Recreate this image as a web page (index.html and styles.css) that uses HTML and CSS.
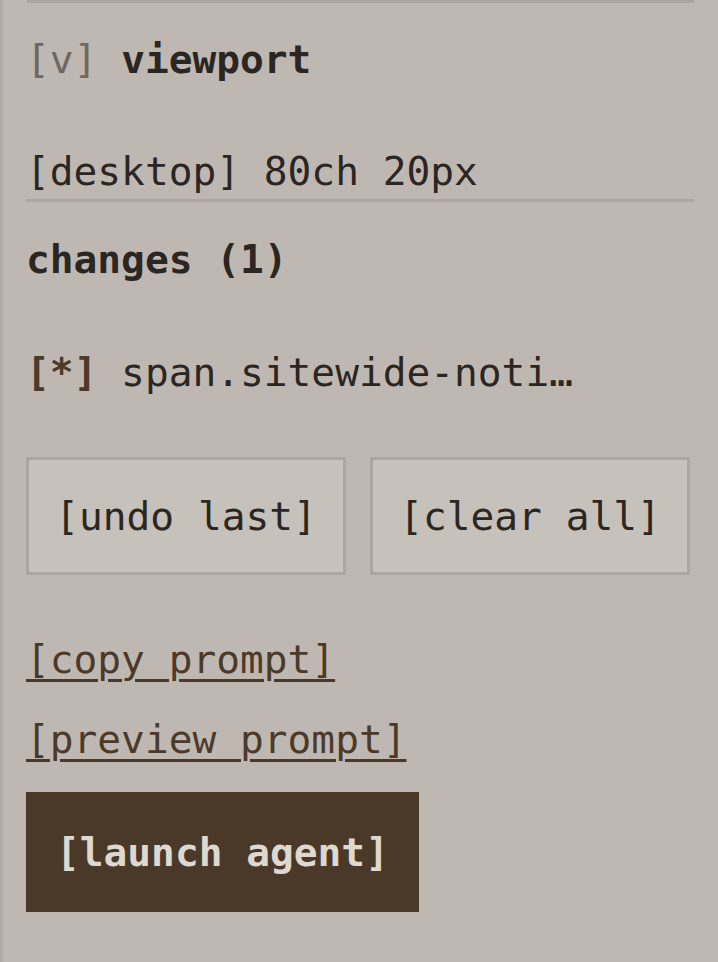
FILE: index.html
```html
<!DOCTYPE html>
<html lang="en">
<head>
<meta charset="utf-8">
<title>viewport panel</title>
<link rel="stylesheet" href="styles.css">
</head>
<body>
<div class="panel">
  <div class="rule-top"></div>
  <div class="section-head"><span class="toggle">[v]</span> <span class="title">viewport</span></div>
  <div class="viewport-row">[desktop] 80ch 20px</div>
  <div class="changes-title">changes (1)</div>
  <ul class="change-list">
    <li class="change-item"><span class="mark">[*]</span> span.sitewide-noti…</li>
  </ul>
  <div class="btn-row">
    <button class="btn">[undo last]</button>
    <button class="btn">[clear all]</button>
  </div>
  <a class="link link-copy" href="#">[copy prompt]</a>
  <a class="link link-preview" href="#">[preview prompt]</a>
  <button class="launch">[launch agent]</button>
</div>
</body>
</html>
```
FILE: styles.css
```css
html, body {
  margin: 0;
  padding: 0;
  background: #bfb8b2;
}
body {
  font-family: "DejaVu Sans Mono", "Liberation Mono", monospace;
  font-size: 39.5px;
  line-height: 48px;
  color: #2b2622;
  min-height: 962px;
}
.panel {
  border-left: 3px solid #b2aba5;
  padding: 0 24px 0 23px;
  min-height: 962px;
  box-sizing: border-box;
  display: flex;
  flex-direction: column;
  align-items: flex-start;
}
.rule-top {
  align-self: stretch;
  border-top: 3px solid #aca59f;
  margin-left: 1px;
}
.section-head {
  margin-top: 32px;
  white-space: pre;
}
.toggle {
  color: #6f6761;
}
.title {
  font-weight: bold;
}
.viewport-row {
  margin-top: 64px;
  align-self: stretch;
  padding-bottom: 4px;
  border-bottom: 3px solid #aea7a0;
}
.changes-title {
  margin-top: 33px;
  font-weight: bold;
}
.change-list {
  list-style: none;
  margin: 65px 0 0;
  padding: 0;
}
.change-item {
  white-space: pre;
}
.mark {
  font-weight: bold;
  color: #4b3a2a;
}
.btn-row {
  margin-top: 61px;
  align-self: stretch;
  display: grid;
  grid-template-columns: 1fr 1fr;
  gap: 24px;
  padding-right: 4px;
}
.btn {
  font: inherit;
  line-height: 48px;
  color: #2b2622;
  background: #c6c1bb;
  border: 3px solid #ada69e;
  padding: 32px 0;
  margin: 0;
  text-align: center;
  white-space: pre;
}
.link {
  color: #4b3a2a;
  text-decoration: underline;
  text-decoration-thickness: 3px;
  text-underline-offset: 6px;
  white-space: pre;
}
.link-copy {
  margin-top: 60px;
}
.link-preview {
  margin-top: 32px;
}
.launch {
  margin-top: 29px;
  font: inherit;
  font-weight: bold;
  line-height: 48px;
  color: #ded8d1;
  background: #4a3828;
  border: none;
  padding: 36px 30px;
  white-space: pre;
}
```
